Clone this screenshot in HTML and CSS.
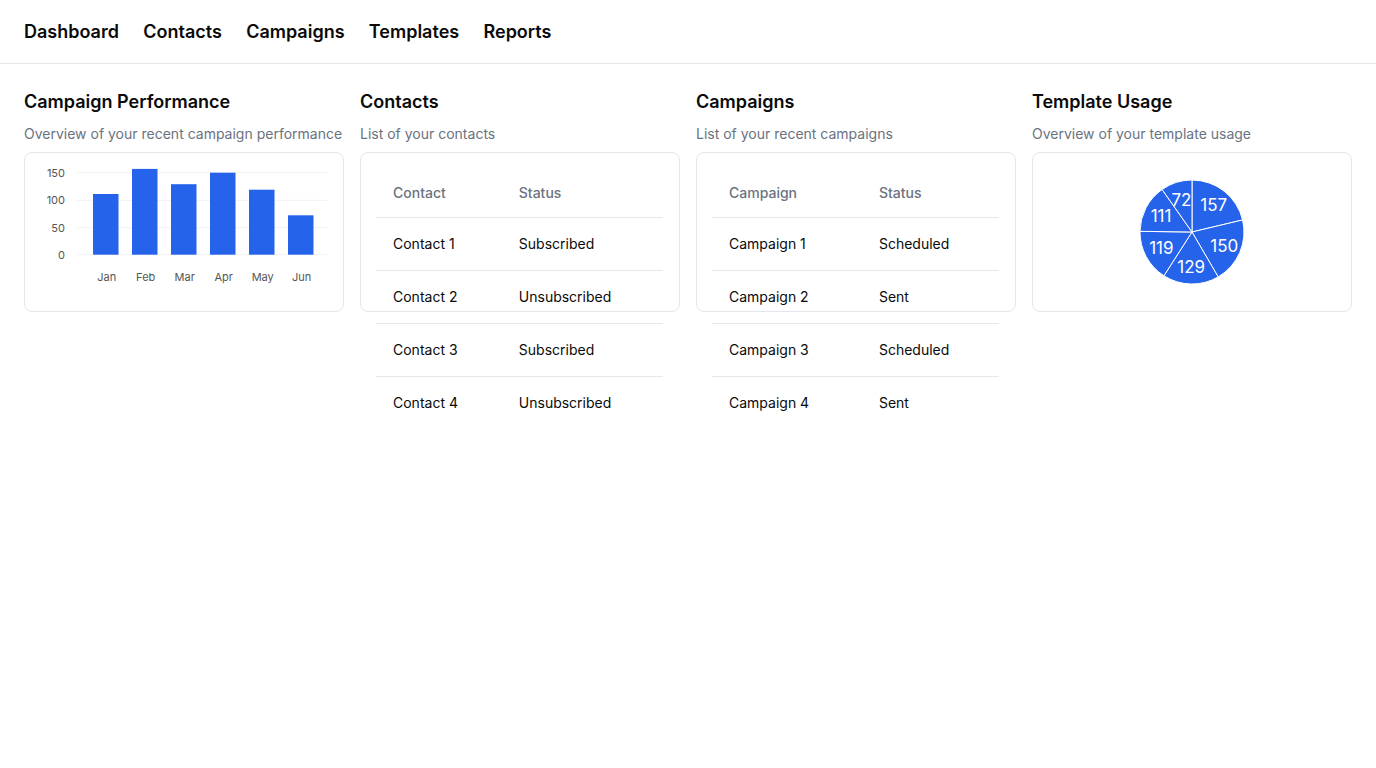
FILE: index.html
```html
<!DOCTYPE html>
<html lang="en">
<head>
<meta charset="utf-8">
<title>Dashboard</title>
<link rel="stylesheet" href="styles.css">
</head>
<body>
<header class="topbar">
  <nav class="nav">
    <a class="nav-link">Dashboard</a>
    <a class="nav-link">Contacts</a>
    <a class="nav-link">Campaigns</a>
    <a class="nav-link">Templates</a>
    <a class="nav-link">Reports</a>
  </nav>
</header>
<main class="grid">
  <section class="panel">
    <h2 class="panel-title">Campaign Performance</h2>
    <p class="panel-sub">Overview of your recent campaign performance</p>
    <div class="card">
      <svg class="chart" width="318" height="158" viewBox="0 0 318 158">
        <g class="gridlines">
          <line x1="52" x2="302" y1="19.7" y2="19.7"/>
          <line x1="52" x2="302" y1="47.3" y2="47.3"/>
          <line x1="52" x2="302" y1="74.7" y2="74.7"/>
          <line x1="52" x2="302" y1="101.7" y2="101.7"/>
        </g>
        <g class="bars">
          <rect x="68" y="41" width="25.5" height="60.7"/>
          <rect x="107" y="15.9" width="25.5" height="85.8"/>
          <rect x="146" y="31.2" width="25.5" height="70.5"/>
          <rect x="185" y="19.7" width="25.5" height="82"/>
          <rect x="224" y="36.7" width="25.5" height="65"/>
          <rect x="263" y="62.3" width="25.5" height="39.4"/>
        </g>
        <g class="ytick">
          <text x="40" y="19.7">150</text>
          <text x="40" y="47.3">100</text>
          <text x="40" y="74.7">50</text>
          <text x="40" y="101.7">0</text>
        </g>
        <g class="xtick">
          <text x="81.7" y="124">Jan</text>
          <text x="120.7" y="124">Feb</text>
          <text x="159.7" y="124">Mar</text>
          <text x="198.7" y="124">Apr</text>
          <text x="237.7" y="124">May</text>
          <text x="276.7" y="124">Jun</text>
        </g>
      </svg>
    </div>
  </section>

  <section class="panel">
    <h2 class="panel-title">Contacts</h2>
    <p class="panel-sub">List of your contacts</p>
    <div class="card-frame">
      <table class="table">
        <thead><tr><th>Contact</th><th>Status</th></tr></thead>
        <tbody>
          <tr><td>Contact 1</td><td>Subscribed</td></tr>
          <tr><td>Contact 2</td><td>Unsubscribed</td></tr>
          <tr><td>Contact 3</td><td>Subscribed</td></tr>
          <tr><td>Contact 4</td><td>Unsubscribed</td></tr>
        </tbody>
      </table>
    </div>
  </section>

  <section class="panel">
    <h2 class="panel-title">Campaigns</h2>
    <p class="panel-sub">List of your recent campaigns</p>
    <div class="card-frame">
      <table class="table">
        <thead><tr><th>Campaign</th><th>Status</th></tr></thead>
        <tbody>
          <tr><td>Campaign 1</td><td>Scheduled</td></tr>
          <tr><td>Campaign 2</td><td>Sent</td></tr>
          <tr><td>Campaign 3</td><td>Scheduled</td></tr>
          <tr><td>Campaign 4</td><td>Sent</td></tr>
        </tbody>
      </table>
    </div>
  </section>

  <section class="panel">
    <h2 class="panel-title">Template Usage</h2>
    <p class="panel-sub">Overview of your template usage</p>
    <div class="card">
      <svg class="pie" width="318" height="158" viewBox="0 0 318 158">
        <g class="slices">
          <path d="M159 79 L159 27 A52 52 0 0 1 209.58 66.94 Z"/>
          <path d="M159 79 L209.58 66.94 A52 52 0 0 1 185.19 123.92 Z"/>
          <path d="M159 79 L185.19 123.92 A52 52 0 0 1 130.92 122.77 Z"/>
          <path d="M159 79 L130.92 122.77 A52 52 0 0 1 107 78.34 Z"/>
          <path d="M159 79 L107 78.34 A52 52 0 0 1 129.08 36.47 Z"/>
          <path d="M159 79 L129.08 36.47 A52 52 0 0 1 159 27 Z"/>
        </g>
        <g class="pie-labels">
          <text x="180.7" y="51.5">157</text>
          <text x="191.3" y="92.8">150</text>
          <text x="158.2" y="114">129</text>
          <text x="128.4" y="94.5">119</text>
          <text x="128" y="62.7">111</text>
          <text x="148.4" y="46.6">72</text>
        </g>
      </svg>
    </div>
  </section>
</main>
</body>
</html>
```

FILE: styles.css
```css
*, *::before, *::after {
  box-sizing: border-box;
}

html, body {
  margin: 0;
  padding: 0;
  background: #ffffff;
}

body {
  font-family: Inter, "Noto Sans", "Liberation Sans", sans-serif;
  color: #0a0a0a;
}

.topbar {
  height: 64px;
  border-bottom: 1px solid #e5e7eb;
  padding: 18px 24px 0;
}

.nav {
  display: flex;
  gap: 24.3px;
}

.nav-link {
  font-size: 18px;
  line-height: 28px;
  font-weight: 600;
  color: #0a0a0a;
  text-decoration: none;
}

.grid {
  display: grid;
  grid-template-columns: repeat(4, 320px);
  align-items: start;
  gap: 16px;
  padding: 24px 24px 24px;
}

.panel {
  display: flex;
  flex-direction: column;
}

.panel-title {
  margin: 0;
  font-size: 18px;
  line-height: 28px;
  font-weight: 600;
}

.panel-sub {
  margin: 8px 0 0;
  font-size: 14px;
  line-height: 20px;
  color: #6b7280;
}

.card {
  margin-top: 8px;
  height: 160px;
  flex: none;
  border: 1px solid #e5e7eb;
  border-radius: 8px;
  background: #fff;
}

/* card whose content spills past its 160px frame */
.card-frame {
  position: relative;
  margin-top: 8px;
  padding: 17px 17px 0 16px;
}

.card-frame::before {
  content: "";
  position: absolute;
  left: 0;
  right: 0;
  top: 0;
  height: 160px;
  border: 1px solid #e5e7eb;
  border-radius: 8px;
  pointer-events: none;
}

.chart, .pie {
  display: block;
}

.gridlines line {
  stroke: #f1f2f4;
  stroke-width: 1;
}

.bars rect {
  fill: #2563eb;
}

.ytick text {
  font-size: 11px;
  fill: #555;
  text-anchor: end;
  dominant-baseline: central;
}

.xtick text {
  font-size: 11px;
  fill: #555;
  text-anchor: middle;
  dominant-baseline: central;
}

.slices path {
  fill: #2563eb;
  stroke: #ffffff;
  stroke-width: 1;
}

.pie-labels text {
  font-size: 17px;
  fill: #ffffff;
  text-anchor: middle;
  dominant-baseline: central;
}

.table {
  width: 100%;
  border-collapse: collapse;
  font-size: 14px;
  line-height: 20px;
}

.table th {
  height: 48px;
  padding: 0 16px 0 17px;
  text-align: left;
  font-weight: 500;
  color: #6b7280;
  border-bottom: 1px solid #e5e7eb;
}

.table td {
  padding: 16px 16px 16px 17px;
  color: #0a0a0a;
  border-bottom: 1px solid #e5e7eb;
}

.table tbody tr:last-child td {
  border-bottom: 0;
}
```
